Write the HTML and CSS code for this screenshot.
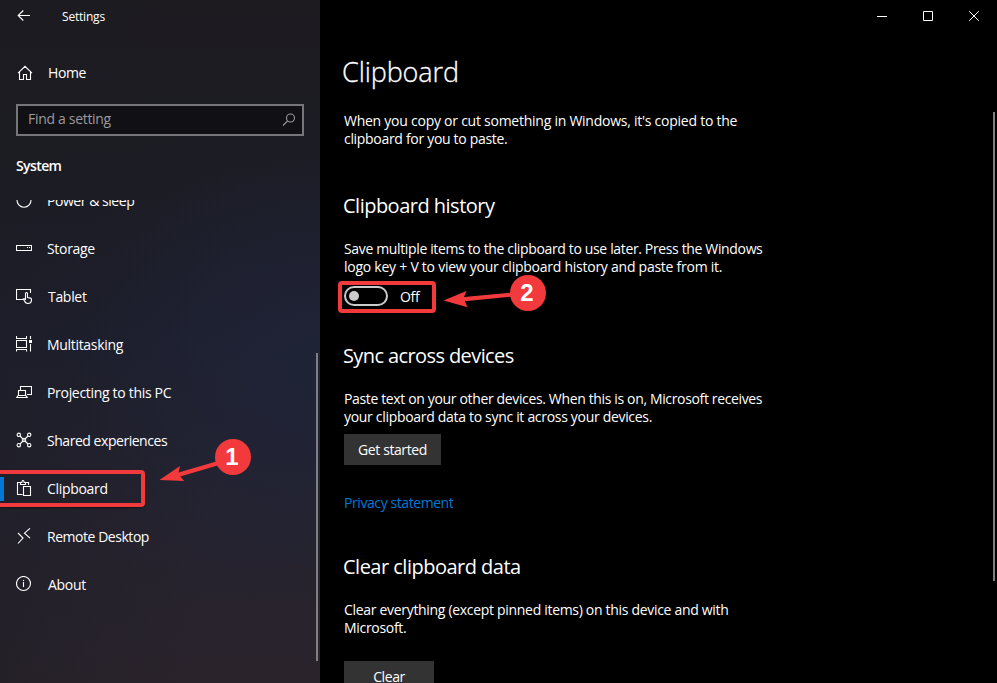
FILE: index.html
```html
<!DOCTYPE html>
<html lang="en">
<head>
  <meta charset="UTF-8" />
  <meta name="viewport" content="width=device-width, initial-scale=1.0"/>
  <title>Settings</title>
  <link rel="stylesheet" href="styles.css">
</head>
<body>
  <div class="window">
    <aside class="sidebar">
      <div class="titlebar">
        <svg class="back" width="14" height="12" viewBox="0 0 14 12"><path d="M13 5.500H1M6.300 .5L1.200 5.500l5.100 5"/></svg>
        <span class="app-name">Settings</span>
      </div>

      <a class="home">
        <svg class="icon" viewBox="0 0 16 16"><path d="M1 8.200L8 1.300l7 6.900M2.500 7v7.500h4V9.500h3v5h4V7"/></svg>
        <span>Home</span>
      </a>

      <div class="search">
        <span>Find a setting</span>
        <svg width="14" height="14" viewBox="0 0 14 14"><circle cx="8.500" cy="5" r="4"/><path d="M5.500 8L1 12.500"/></svg>
      </div>

      <div class="group">System</div>

      <nav class="nav">
        <ul>
          <li>
            <svg class="icon" viewBox="0 0 16 16"><path d="M8 0v7M4 2.500a7 7 0 1 0 8 0"/></svg>
            <span class="tight">Power &amp; sleep</span>
          </li>
          <li>
            <svg class="icon" viewBox="0 0 16 16"><path d="M.5 5.500h15v5H.5zM11 7.500h1M13 7.500h1"/></svg>
            <span>Storage</span>
          </li>
          <li>
            <svg class="icon" viewBox="0 0 16 16"><path d="M7 11.500H.5v-10h14V5M9.500 12V5.500a1 1 0 0 1 2 0v4l3 .6q1 .3 1 1.500c0 2.500-1.200 3.900-3.500 3.900-2 0-3-1-3.500-2.500L7.300 11q1-.8 2.200 1"/></svg>
            <span class="nudge">Tablet</span>
          </li>
          <li>
            <svg class="icon" viewBox="0 0 16 16"><path d="M.5 0v2.500h10V0M.5 4.500h10v7H.5zM.5 15.500v-2h10v2M14.500 0v3M14.500 8v7.500"/><path class="solid" d="M13 4h3v3h-3z"/></svg>
            <span>Multitasking</span>
          </li>
          <li>
            <svg class="icon" viewBox="0 0 16 16"><path d="M4.500 6V2.500h11v8H11M2.500 6.500h7v5h-7zM2 11.500L.8 13.500h10.400l-1.200-2"/></svg>
            <span>Projecting to this PC</span>
          </li>
          <li>
            <svg class="icon" viewBox="0 0 16 16"><circle cx="2.800" cy="2.800" r="1.700"/><circle cx="13.200" cy="2.800" r="1.700"/><circle cx="2.800" cy="13.200" r="1.700"/><circle cx="13.200" cy="13.200" r="1.700"/><path d="M4 4l3 3M12 4L9 7M4 12l3-3M12 12L9 9"/><path d="M8 6.300L9.700 8 8 9.700 6.300 8z"/></svg>
            <span class="tight">Shared experiences</span>
          </li>
          <li class="active">
            <svg class="icon" viewBox="0 0 16 16"><path d="M6.500 14.500h-5v-12h3M9.500 2.500h3V5M4.500 4.500v-2h1.300q.2-2 1.200-2t1.200 2h1.300v2zM7.500 6.500h7v9h-7z"/></svg>
            <span>Clipboard</span>
          </li>
          <li>
            <svg class="icon" viewBox="0 0 16 16"><path d="M2 5l5 5-5 5.500M14 .3L8.500 5.200l5.500 5"/></svg>
            <span class="tight">Remote Desktop</span>
          </li>
          <li>
            <svg class="icon" viewBox="0 0 16 16"><circle cx="7.500" cy="7.500" r="7"/><path d="M7.500 6v5M7.500 4v1"/></svg>
            <span class="nudge">About</span>
          </li>
        </ul>
      </nav>
      <div class="thumb thumb-nav"></div>
    </aside>

    <main class="content">
      <div class="controls">
        <svg width="10" height="10" viewBox="0 0 10 10"><path d="M0 5.500h10"/></svg>
        <svg width="10" height="10" viewBox="0 0 10 10"><path d="M.5 .5h9v9h-9z"/></svg>
        <svg width="10" height="10" viewBox="0 0 10 10"><path d="M.2 .2l9.600 9.600M9.800 .2L.2 9.800"/></svg>
      </div>

      <h1>Clipboard</h1>
      <p><span class="loose">When you copy or cut something in Windows, it's copied to the</span><br>
        clipboard for you to paste.</p>

      <section class="history">
        <h2>Clipboard history</h2>
        <p><span class="snug">Save multiple items to the clipboard to use later. Press the Windows</span><br>
          <span class="loose">logo key + V to view your clipboard history and paste from it.</span></p>
        <div class="toggle-row">
          <div class="toggle"></div>
          <span>Off</span>
        </div>
      </section>

      <section class="sync">
        <h2 class="sync-title">Sync across devices</h2>
        <p><span class="snug">Paste text on your other devices. When this is on, Microsoft receives</span><br>
          your clipboard data to sync it across your devices.</p>
        <button type="button" class="btn-start">Get started</button>
        <a class="link">Privacy statement</a>
      </section>

      <section class="clear">
        <h2>Clear clipboard data</h2>
        <p>Clear everything (except pinned items) on this device and with<br>
          Microsoft.</p>
        <button type="button" class="btn-clear">Clear</button>
      </section>
      <div class="thumb thumb-page"></div>
    </main>

    <!-- step markers over the window -->
    <div class="frame frame-1"></div>
    <div class="frame frame-2"></div>
    <svg class="arrows" width="997" height="683" viewBox="0 0 997 683">
      <path d="M159.500 480L180 466l-1.500 6.500L218 461l1.200 4-39 11.500 4 4.500z"/>
      <path d="M443.500 300.500L466.500 291l-2.500 6L512 292.500l.4 4-47.500 4.700 2.600 6z"/>
    </svg>
    <div class="step step-1">1</div>
    <div class="step step-2">2</div>
  </div>
</body>
</html>
```
FILE: styles.css
```css
:root {
  --red: #f23a3c;
  --accent: #0078d7;
  --thumb: #7f7f80;
}

* {
  box-sizing: border-box;
}

body {
  margin: 0;
  background-color: #000;
  color: #fff;
  font-family: "Segoe UI", "Open Sans", "Noto Sans", sans-serif;
  font-size: 14px;
  line-height: 18px;
  letter-spacing: -.31px;
  overflow: hidden;
}

.loose {
  letter-spacing: -.25px;
}

.snug {
  letter-spacing: -.355px;
}

.window {
  position: relative;
  display: flex;
  width: 997px;
  height: 683px;
  overflow: hidden;
  white-space: nowrap;
}

svg {
  fill: none;
  stroke: #fff;
  stroke-width: 1.1;
  flex: none;
}

/* sidebar */
.sidebar {
  position: relative;
  display: flex;
  flex-direction: column;
  width: 320px;
  background:
    radial-gradient(ellipse 240px 230px at 100% 55%, rgba(31, 36, 56, .8), transparent),
    linear-gradient(100deg, rgba(27, 27, 33, .55), transparent 70%),
    linear-gradient(180deg, #1d1b20 0, #1c1c24 22%, #1e2030 50%, #26232f 78%, #2a232c 100%);
}

.titlebar {
  display: flex;
  align-items: center;
  height: 33px;
  padding-left: 17px;
  font-size: 12px;
  letter-spacing: -.2px;
}

.back {
  margin-top: -1px;
}

.app-name {
  margin-left: 31px;
}

.home {
  display: flex;
  align-items: center;
  height: 32px;
  margin-top: 24px;
  padding-left: 17px;
}

.icon {
  width: 16px;
  height: 16px;
}

.home span {
  margin-left: 15px;
  letter-spacing: -.4px;
}

.search {
  display: flex;
  align-items: center;
  justify-content: space-between;
  height: 32px;
  margin: 15px 16px 0;
  padding: 0 6px 0 10px;
  border: 2px solid #77767a;
  background-color: #111015;
  color: #9b9a9d;
}

.search span {
  margin-top: -2px;
}

.search svg {
  stroke: #9b9a9d;
}

.group {
  margin: 21px 16px 0;
  height: 18px;
  font-weight: 600;
  letter-spacing: -.6px;
}

.nav {
  flex: 1;
  margin-top: 25px;
  overflow: hidden;
}

.nav ul {
  list-style: none;
  margin: -23px 0 0;
  padding: 0;
}

.nav li {
  display: flex;
  align-items: center;
  height: 48px;
  padding-left: 16px;
}

.nav li .icon {
  margin-top: -2px;
}

.nav li span {
  margin-left: 15px;
}

.nav li .nudge {
  margin-left: 16px;
}

.tight {
  letter-spacing: -.46px;
}

.nav .active {
  background: linear-gradient(var(--accent), var(--accent)) 0 50% / 4px 24px no-repeat;
}

.thumb {
  position: absolute;
  width: 2px;
  background-color: var(--thumb);
}

.thumb-nav {
  left: 316px;
  top: 353px;
  height: 308px;
}

.thumb-page {
  right: 2px;
  top: 112px;
  height: 469px;
}

/* content */
.content {
  position: relative;
  flex: 1;
  padding-left: 24px;
}

.controls {
  display: flex;
  justify-content: flex-end;
  align-items: center;
  gap: 36px;
  height: 32px;
  padding-right: 18px;
}

.controls svg {
  stroke-width: 1;
}

h1, h2, p {
  margin: 0;
  font-weight: 400;
}

h1 {
  margin: 22px 0 22px -2px;
  font-size: 27px;
  font-weight: 300;
  line-height: 36px;
  letter-spacing: -.1px;
  -webkit-text-stroke: .3px #fff;
}

h2 {
  margin-left: -1px;
  font-size: 20px;
  line-height: 28px;
  letter-spacing: -.51px;
}

.sync-title {
  letter-spacing: -.6px;
}

section p {
  margin-top: 20px;
}

.history {
  margin-top: 44px;
}

.toggle-row {
  display: flex;
  align-items: center;
  height: 20px;
  margin-top: 10px;
}

.toggle {
  display: flex;
  align-items: center;
  width: 44px;
  height: 20px;
  padding-left: 3px;
  border: 2px solid #ccc;
  border-radius: 10px;
}

.toggle::before {
  content: "";
  width: 10px;
  height: 10px;
  border-radius: 50%;
  background-color: #ccc;
}

.toggle-row span {
  margin: 2px 0 0 12px;
}

.sync {
  margin-top: 36px;
}

button {
  display: block;
  padding: 0;
  border: none;
  background-color: #333;
  color: #fff;
  font: inherit;
  letter-spacing: -.4px;
}

.btn-start {
  width: 97px;
  height: 31px;
  margin-top: 8px;
}

.link {
  display: block;
  margin-top: 29px;
  color: var(--accent);
  letter-spacing: -.42px;
}

.clear {
  margin-top: 41px;
}

.btn-clear {
  width: 90px;
  height: 32px;
  margin-top: 24px;
}

/* markers */
.frame {
  position: absolute;
  border: 4px solid var(--red);
  border-radius: 4px;
  box-shadow: 0 1px 2px rgba(0, 0, 0, .5);
}

.frame-1 {
  left: -5px;
  top: 470px;
  width: 150px;
  height: 37px;
}

.frame-2 {
  left: 338px;
  top: 281px;
  width: 98px;
  height: 32px;
}

.arrows {
  position: absolute;
  left: 0;
  top: 0;
  fill: var(--red);
  stroke: none;
}

.solid {
  fill: #fff;
  stroke: none;
}

.step {
  position: absolute;
  width: 36px;
  height: 36px;
  border-radius: 50%;
  background-color: var(--red);
  font: bold 24px/36px "Liberation Sans", Arial, sans-serif;
  letter-spacing: 0;
  text-align: center;
  text-indent: -1px;
}

.step-1 {
  left: 214.5px;
  top: 438.5px;
}

.step-2 {
  left: 509.5px;
  top: 274.5px;
}
```
